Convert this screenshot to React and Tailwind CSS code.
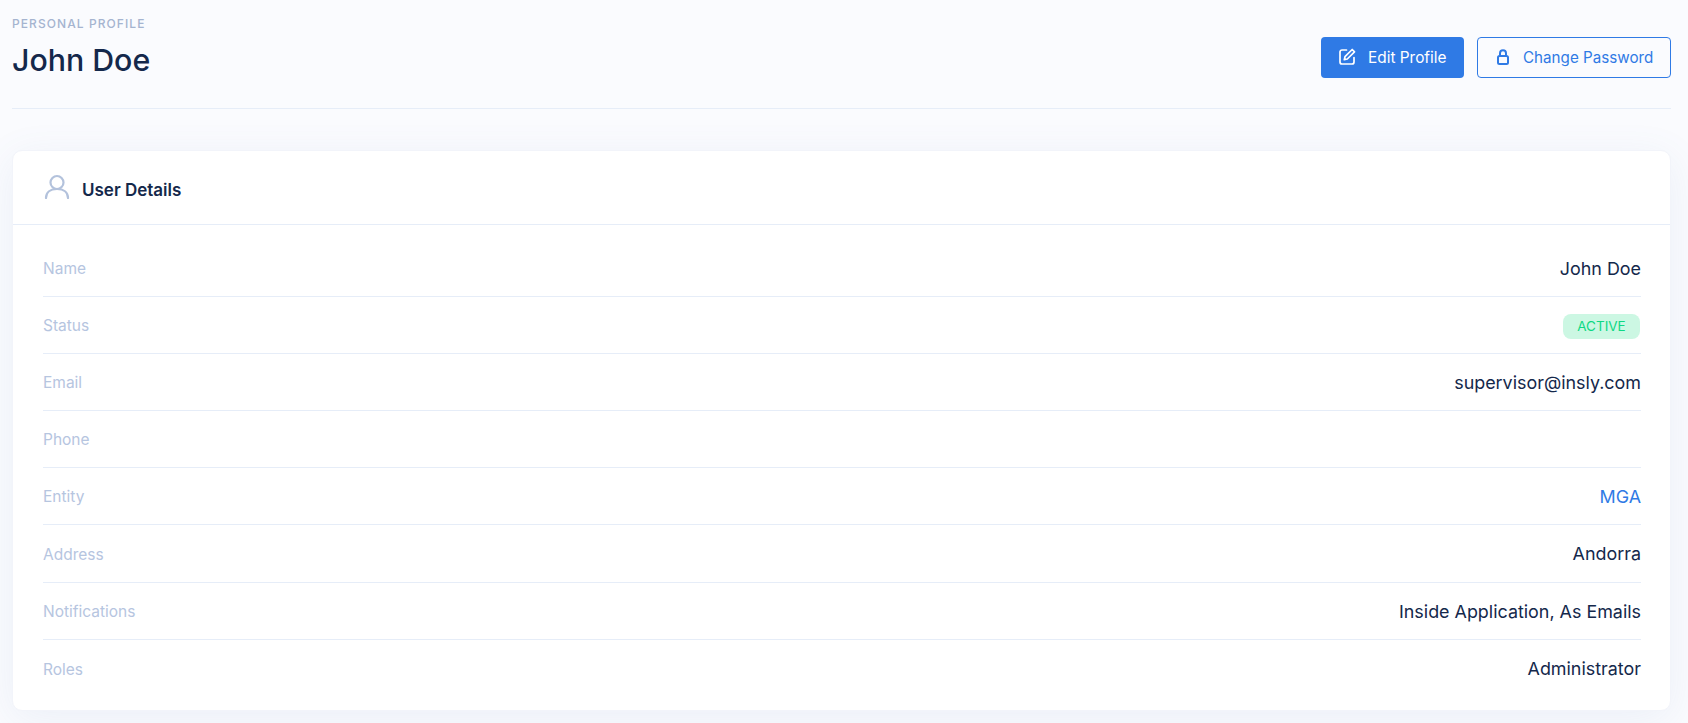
import React from "react";

function Row({ label, children, last, tall }) {
  return (
    <div className={`flex items-center justify-between pt-[2px] ${tall ? "h-[58px]" : "h-[57px]"} ${last ? "" : "border-b border-[#e6edf8]"}`}>
      <span className="text-[15.5px] text-[#b6c5df]">{label}</span>
      <span className="text-[17.9px] text-[#14284b]">{children}</span>
    </div>
  );
}

export default function App() {
  return (
    <div className="min-h-[723px] bg-[#fafbfe] pl-3 pr-[17px] font-['Inter',sans-serif]">
      <header className="flex items-start justify-between h-[109px] border-b border-[#e6edf8]">
        <div>
          <div className="pt-[16px] text-[12px] leading-[16px] font-medium tracking-[0.09em] text-[#a5b4d0]">PERSONAL PROFILE</div>
          <h1 className="mt-[7px] text-[30.3px] leading-[42px] font-medium text-[#14284b]">John Doe</h1>
        </div>
        <div className="flex gap-[13px] pt-[37px]">
          <button className="flex items-center gap-[12px] w-[143px] h-[41px] pl-[18px] pt-[1px] rounded-[4px] bg-[#2f7ae5] text-[15.4px] text-white">
            <svg className="-mt-[3px]" width="17" height="17" viewBox="0 0 17 17" fill="none" stroke="currentColor" strokeWidth="1.7" strokeLinejoin="round" strokeLinecap="round">
              <path d="M7.5 2H3a2 2 0 0 0-2 2v10a2 2 0 0 0 2 2h10a2 2 0 0 0 2-2V9.5" />
              <path d="M13.2 1.5l2.3 2.3-7.2 7.2-3 .7.7-3z" />
            </svg>
            Edit Profile
          </button>
          <button className="flex items-center gap-[14px] w-[194px] h-[41px] pl-[19px] pt-[1px] rounded-[4px] border border-[#2f7ae5] text-[15.2px] text-[#2f7ae5]">
            <svg className="-mt-[3px]" width="12" height="16" viewBox="0 0 12 16" fill="none" stroke="currentColor" strokeWidth="2" strokeLinejoin="round">
              <rect x="1" y="7" width="10" height="8" rx="1.5" />
              <path d="M3 7V4.2a3 3 0 0 1 6 0V7" />
            </svg>
            Change Password
          </button>
        </div>
      </header>
      <section className="mt-[41px] h-[561px] rounded-[10px] border border-[#f2f4fa] bg-white shadow-[0_8px_40px_rgba(90,120,180,0.09)]">
        <div className="flex items-center gap-[12px] h-[74px] pl-[31px] border-b border-[#e6edf8]">
          <svg className="-mt-[4px]" width="26" height="26" viewBox="0 0 26 26" fill="none" stroke="#b3c2dc" strokeWidth="2.2" strokeLinecap="round">
            <circle cx="13" cy="9.5" r="6.5" />
            <path d="M2 25c0-6 4.5-9 11-9s11 3 11 9" />
          </svg>
          <span className="pt-[6px] text-[17px] font-semibold text-[#14284b]">User Details</span>
        </div>
        <div className="pl-[30px] pr-[29px] pt-[15px]">
          <Row label="Name">John Doe</Row>
          <Row label="Status">
            <span className="flex items-center justify-center w-[77px] h-[25px] mr-[1px] rounded-[8px] bg-[#ccf7e3] text-[13.5px] text-[#0ed984]">ACTIVE</span>
          </Row>
          <Row label="Email">supervisor@insly.com</Row>
          <Row label="Phone"></Row>
          <Row label="Entity"><span className="text-[#2f7ae5]">MGA</span></Row>
          <Row label="Address" tall>Andorra</Row>
          <Row label="Notifications">Inside Application, As Emails</Row>
          <Row label="Roles" last>Administrator</Row>
        </div>
      </section>
    </div>
  );
}
